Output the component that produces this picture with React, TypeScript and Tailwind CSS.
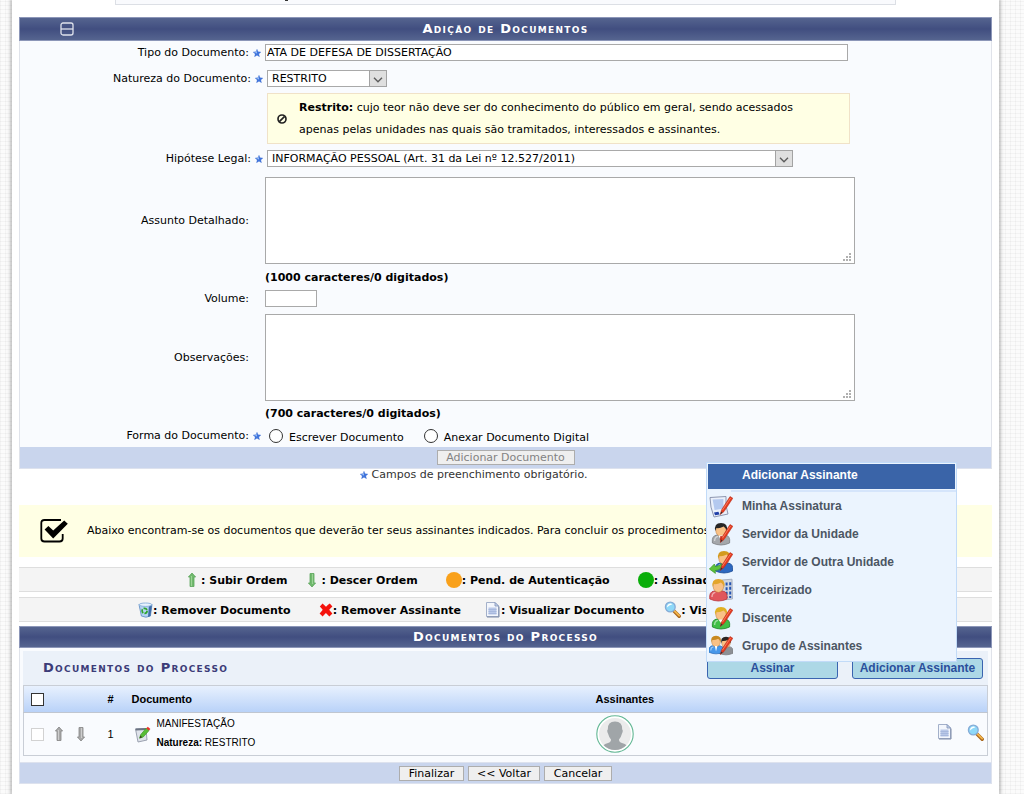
import React from "react";

const verdana = "font-['DejaVu_Sans',sans-serif]";
const arial = "font-['Liberation_Sans',sans-serif]";

function Star() {
  return (
    <svg viewBox="0 0 16 16" className="size-2 shrink-0" aria-hidden="true">
      <path d="M8 0.5 L10.2 5.6 L15.8 6.2 L11.6 9.8 L13 15.5 L8 12.4 L3 15.5 L4.4 9.8 L0.2 6.2 L5.8 5.6 Z" fill="#3f74dc" stroke="#3a6bd0" strokeWidth="0.6" />
      <path d="M8 2 L8 9 L1.5 6.8 L6.2 6.4 Z" fill="#9cc0f6" />
    </svg>
  );
}

function Arrow({ down = false, gray = false }: { down?: boolean; gray?: boolean }) {
  return (
    <svg viewBox="0 0 10 16" className={down ? "h-4 w-[10px] shrink-0 rotate-180" : "h-4 w-[10px] shrink-0"} aria-hidden="true">
      <path
        d="M5 1 L8.6 5 L7 5 L7 14.5 L3 14.5 L3 5 L1.4 5 Z"
        fill={gray ? "#a9a9a9" : "#70b96d"}
        stroke={gray ? "#848484" : "#5aa45a"}
        strokeWidth="0.8"
        strokeLinejoin="round"
      />
      <path d="M4.4 4 V14" stroke={gray ? "#d2d2d2" : "#a2d69b"} strokeWidth="1" />
    </svg>
  );
}

function PageIcon() {
  return (
    <svg viewBox="0 0 16 18" className="h-[18px] w-4 shrink-0" aria-hidden="true">
      <path d="M1.5 1.5 H10 L13.5 5 V15.5 H1.5 Z" fill="#f3f6fc" stroke="#a3b0ca" />
      <path d="M14 5.5 V16 H2" fill="none" stroke="#7c8aa6" />
      <path d="M10 1.5 V5 H13.5 Z" fill="#c9d7ef" stroke="#7e90b5" strokeWidth="0.8" />
      <rect x="3.5" y="6.500" width="8" height="7" fill="#b9c8e8" />
      <path d="M3.5 8.500 H11.5 M3.5 10.500 H11.5 M3.5 12.500 H11.5" stroke="#a7b8dd" />
    </svg>
  );
}

function Lens() {
  return (
    <svg viewBox="0 0 17 17" className="size-[17px] shrink-0" aria-hidden="true">
      <path d="M10 10 L15.2 15.2" stroke="#a8651b" strokeWidth="3.4" strokeLinecap="round" />
      <path d="M10.5 10 L15.2 14.6" stroke="#f3b54a" strokeWidth="1.8" strokeLinecap="round" />
      <circle cx="6.3" cy="6" r="4.9" fill="#8ed8f8" stroke="#86abd6" strokeWidth="1.3" />
      <path d="M3 6.4 A3.4 3.4 0 0 1 8.4 3.3 Q5 4 3 6.4" fill="#ffffff" />
    </svg>
  );
}

function Trash() {
  return (
    <svg viewBox="0 0 15 16" className="h-4 w-[15px] shrink-0" aria-hidden="true">
      <path d="M1 2.5 L14 2.5 L12.4 14 Q8 16.4 3.4 14 Z" fill="#b4d3f3" stroke="#6692c6" strokeWidth="0.9" />
      <path d="M11 3 L14 2.5 L12.4 14 L10 15 Z" fill="#3e6da9" />
      <ellipse cx="7.5" cy="2.7" rx="6.4" ry="1.7" fill="#e7f2fd" stroke="#7ba6d6" strokeWidth="0.8" />
      <circle cx="6.6" cy="8.8" r="2.5" fill="none" stroke="#2fa52c" strokeWidth="1.7" strokeDasharray="4 1.2" />
    </svg>
  );
}

function Cross() {
  return (
    <svg viewBox="0 0 14 14" className="h-[14px] w-[14px] shrink-0" aria-hidden="true">
      <path d="M0.8 3.4 L3.6 0.6 Q5 2.2 7 3.8 Q9.2 1.6 10.800 0.600 L13.400 3.400 Q11.400 5 10.200 6.800 Q11.400 8.600 13.400 10.600 L10.400 13.400 Q8.600 11.400 6.900 9.900 Q5.200 11.400 3.600 13.400 L0.600 10.600 Q2.600 8.600 3.700 6.800 Q2.600 5 0.800 3.400 Z" fill="#f4120c" />
    </svg>
  );
}

function EditIcon() {
  return (
    <svg viewBox="0 0 17 17" className="size-[17px] shrink-0" aria-hidden="true">
      <path d="M1.5 3 L12 2.5 L13 14 L4 16 Z" fill="#dfe3eb" stroke="#9299a8" strokeWidth="0.9" />
      <path d="M1.5 2.600 L12 2.100 L12.1 4 L1.8 4.6 Z" fill="#6b7382" />
      <path d="M5.600 12.200 L6.600 8.800 L12.2 2.200 L15 4.6 L9.200 11 Z" fill="#58bd36" stroke="#3f9a28" strokeWidth="0.7" />
      <path d="M12.2 2.4 L13.8 0.800 L16.4 3 L15 4.6 Z" fill="#e9312a" />
      <path d="M5.600 12.200 L6.400 9.600 L8.200 11.200 Z" fill="#37421f" />
    </svg>
  );
}

function RedPen() {
  return (
    <g>
      <path d="M11.3 20.5 L12.5 16 L21 2.6 L23.8 4.2 L15 17.6 Z" fill="#e5391f" stroke="#b8301c" strokeWidth="0.6" />
      <path d="M13.4 16.2 L21.6 4" stroke="#ff8a69" strokeWidth="0.8" />
      <path d="M11.3 20.5 L12.2 17.4 L13.6 18.4 Z" fill="#333" />
    </g>
  );
}

function Person({ hair, body, edge, x = 0 }: { hair: string; body: string; edge: string; x?: number }) {
  return (
    <g transform={`translate(${x} 0)`}>
      <path d="M2.4 21 Q1.4 13.600 7 13 L15 13 Q20.600 13.600 19.600 21 Q11 25 2.4 21 Z" fill={body} stroke={edge} strokeWidth="0.8" />
      <path d="M4.6 19 Q4.6 15 8 14.4" stroke="#ffffff" strokeOpacity="0.5" strokeWidth="1.4" fill="none" />
      <ellipse cx="11" cy="8.5" rx="5.2" ry="5.8" fill="#f9c186" stroke="#c58342" strokeWidth="0.6" />
      <path d="M5.2 9 Q3.800 1 11 1 Q18.200 1 17 9 Q15.600 6 13.6 4.6 Q9.6 6.6 6.4 6 Z" fill={hair} />
    </g>
  );
}

type SignerKind = "sign" | "unit" | "other" | "third" | "student" | "group";

function SignerIcon({ kind }: { kind: SignerKind }) {
  return (
    <svg viewBox="0 0 24 24" className="size-6 shrink-0" aria-hidden="true">
      {kind === "sign" && (
        <g>
          <path d="M1 3.5 L17 2.5 Q16 12 19 20 L5 23 Q1 13 1 3.5 Z" fill="#eaf0fb" stroke="#8e97b0" strokeWidth="1" />
          <path d="M3.600 5.600 L14.400 5 Q14 10 15 14.4 L5.6 16 Z" fill="#b4c9ef" />
          <path d="M5 18.600 L9.400 17.800 L10.600 20.400 L6 21.200 Z" fill="#1f3fa8" />
          <RedPen />
        </g>
      )}
      {kind === "unit" && (
        <g>
          <Person hair="#262626" body="#a4a7ab" edge="#7b7e82" x={1} />
          <path d="M9.4 13.4 L12 18 L14.6 13.4 Z" fill="#fff" />
          <path d="M11.4 14 L12.8 14 L13.2 18 L12 19.4 L10.8 18 Z" fill="#c72b1c" />
          <RedPen />
        </g>
      )}
      {kind === "other" && (
        <g>
          <Person hair="#d39b1f" body="#2d68c0" edge="#194a94" x={4} />
          <path d="M0.4 19 L5.400 14 L6 16.6 Q11 16 12.6 13.6 Q13.6 20 6.2 20.6 L6.400 23.400 Z" fill="#5cc23a" stroke="#3c9a28" strokeWidth="0.7" />
          <RedPen />
        </g>
      )}
      {kind === "third" && (
        <g>
          <path d="M13 2 L23 1.2 L23.400 21 L13 22 Z" fill="#cfd6e2" stroke="#9aa3b3" strokeWidth="0.8" />
          <path d="M17.600 4.6 V20 M21.200 4.2 V20" stroke="#2555b2" strokeWidth="2" strokeDasharray="3 1.6" />
          <Person hair="#e3a52c" body="#e0565c" edge="#b9383e" x={-1.6} />
        </g>
      )}
      {kind === "student" && (
        <g>
          <Person hair="#e0b024" body="#3fbf46" edge="#1c8224" x={1} />
          <path d="M9.4 13.4 L12 17 L14.6 13.4 Z" fill="#fff" />
          <RedPen />
        </g>
      )}
      {kind === "group" && (
        <g>
          <g transform="translate(8 2) scale(0.82)">
            <Person hair="#2a2624" body="#8d9095" edge="#6f7276" />
          </g>
          <g transform="translate(-2 1) scale(0.82)">
            <Person hair="#c88a22" body="#4597ea" edge="#1e62b0" />
            <path d="M9.6 13.4 L11 20 L12.6 13.4 Z" fill="#fff" />
          </g>
          <RedPen />
        </g>
      )}
    </svg>
  );
}

function Avatar() {
  return (
    <svg viewBox="0 0 38 38" className="size-[38px]" role="img" aria-label="Assinante">
      <circle cx="19" cy="19" r="18.2" fill="#fff" stroke="#62b794" strokeWidth="1.1" />
      <circle cx="19" cy="19" r="16" fill="#ebebeb" />
      <path d="M11.8 14.5 Q11.5 6.6 19 6.6 Q26.5 6.6 26.2 14.5 Q27.4 15.4 26 18.6 Q25 22.6 23 24.4 Q23 27 26 28 Q29.4 28.8 30.4 30.2 Q26 34.9 19 34.9 Q12 34.9 7.6 30.2 Q8.6 28.8 12 28 Q15 27 15 24.4 Q13 22.6 12 18.6 Q10.6 15.4 11.8 14.5 Z" fill="#a0a5a8" />
    </svg>
  );
}

function SquareCheck() {
  return (
    <svg viewBox="0 0 28 26" className="h-[26px] w-7 shrink-0" aria-hidden="true">
      <path d="M21 2 H4.500 Q1.300 2 1.300 5 V20.500 Q1.300 23.500 4.500 23.500 H19.500 Q22.700 23.500 22.700 20.500 V16" fill="none" stroke="#000" strokeWidth="1.800" />
      <path d="M4.600 11.600 L8.400 8 L13.200 12.600 L24.200 2.400 L27.800 5.800 L13.200 20.600 Z" fill="#000" />
    </svg>
  );
}

function Chevron() {
  return (
    <span className="pointer-events-none absolute inset-y-0 right-0 flex w-[18px] items-center justify-center border border-[#a3a3a3] bg-[#dfdfdf]">
      <svg viewBox="0 0 10 6" className="mt-[3px] h-[6px] w-[10px]" aria-hidden="true">
        <path d="M1 0.800 L5 4.800 L9 0.800" fill="none" stroke="#5c5c5c" strokeWidth="1.400" />
      </svg>
    </span>
  );
}

function SelectBox({ id, value, width }: { id: string; value: string; width: string }) {
  return (
    <span className={`relative block ${width}`}>
      <select id={id} className="block h-[17px] w-full appearance-none border border-[#a9a9a9] bg-white pr-5 pl-1 text-[11px] leading-[15px] text-black">
        <option>{value}</option>
      </select>
      <Chevron />
    </span>
  );
}

function TextBox({ id }: { id: string }) {
  return (
    <div className="relative max-w-[590px]">
      <textarea id={id} className="block h-[87px] w-full resize-none border border-[#a9a9a9] bg-white" />
      <svg viewBox="0 0 9 9" className="pointer-events-none absolute right-[3px] bottom-[2px] size-[9px]" aria-hidden="true">
        <path d="M6 0h2v2h-2z M3 3h2v2h-2z M6 3h2v2h-2z M0 6h2v2h-2z M3 6h2v2h-2z M6 6h2v2h-2z" fill="#b0b0b0" />
      </svg>
    </div>
  );
}

function Row({ label, id, required = false, children, className = "" }: { label: string; id: string; required?: boolean; children: React.ReactNode; className?: string }) {
  return (
    <div className={`flex items-center ${className}`}>
      <div className="flex w-[229px] shrink-0 justify-end">
        <label htmlFor={id}>{label}</label>
      </div>
      <div className="flex w-4 shrink-0 justify-center">{required && <Star />}</div>
      <div className="min-w-0 flex-1">{children}</div>
    </div>
  );
}

function Bar({ title, icon, height }: { title: string; icon?: React.ReactNode; height: string }) {
  return (
    <div className={`relative flex items-center justify-center border border-[#8c96b8] bg-linear-to-b from-[#55648f] via-[#414e80] to-[#55648f] ${height}`}>
      {icon}
      <h2 className="text-[13px] leading-4 font-bold tracking-widest text-white [font-variant:small-caps]">{title}</h2>
    </div>
  );
}

function LegendItem({ icon, text, className = "" }: { icon: React.ReactNode; text: string; className?: string }) {
  return (
    <li className={`flex shrink-0 items-center ${className}`}>
      {icon}
      <span className="mt-1 whitespace-nowrap">: {text}</span>
    </li>
  );
}

const box = "border border-[#a9a9a9] bg-white";
const formButton = "h-[15px] border border-[#adadad] bg-[#efefef] text-center text-[11px] leading-[13px]";
const actionButton = "h-[21px] w-[131px] rounded-[3px] border border-[#3a64b0] bg-[#add8e6] text-xs leading-[19px] font-bold text-[#2a4f9c]";

const signers: { kind: SignerKind; label: string }[] = [
  { kind: "sign", label: "Minha Assinatura" },
  { kind: "unit", label: "Servidor da Unidade" },
  { kind: "other", label: "Servidor de Outra Unidade" },
  { kind: "third", label: "Terceirizado" },
  { kind: "student", label: "Discente" },
  { kind: "group", label: "Grupo de Assinantes" },
];

function SignerMenu() {
  return (
    <div className="absolute bottom-[17px] -left-px z-10 w-[251px] border border-[#c2dbf8] bg-[#ebf4fe] text-xs font-bold text-[#4c5663]">
      <div className="m-px flex h-[25px] items-center bg-[#3a64a8] pb-0.5 pl-[34px] text-white">Adicionar Assinante</div>
      <div className="ml-6 h-0.5 bg-[#d5e5fb]" />
      <ul className="pb-px">
        {signers.map((s) => (
          <li key={s.kind}>
            <button type="button" className="flex h-7 w-full items-center gap-[9px] pl-0.5 text-left">
              <SignerIcon kind={s.kind} />
              <span>{s.label}</span>
            </button>
          </li>
        ))}
      </ul>
    </div>
  );
}

export default function App() {
  return (
    <div className={`min-h-screen bg-[#fbfbfb] bg-[repeating-linear-gradient(0deg,#00000008_0_1px,transparent_1px_4px),repeating-linear-gradient(90deg,#00000008_0_1px,transparent_1px_5px)] pr-[25px] pl-3 text-[11px] text-black ${verdana}`}>
      <main className="flow-root min-h-screen bg-white pr-[7px] pl-[7px] shadow-[0_0_4px_1px_#00000050]">
        <div className="mx-24 h-[5px] overflow-hidden border border-t-0 border-[#dcdfe5] bg-[#f9fafd] pl-[169px]">
          <div className="h-px w-[3px] bg-[#333]" />
        </div>

        <form className="mt-3" onSubmit={(e) => e.preventDefault()}>
          <Bar
            title="Adição de Documentos"
            height="h-6"
            icon={
              <button type="button" aria-label="Recolher" className="absolute left-10">
                <svg viewBox="0 0 14 14" className="block size-[14px]">
                  <rect x="1" y="1" width="12" height="12" rx="2" fill="none" stroke="#dfe2ec" strokeWidth="1.300" />
                  <path d="M1 7 H13" stroke="#dfe2ec" strokeWidth="1.300" />
                </svg>
              </button>
            }
          />
          <div className="border-x border-[#e0e3ea] bg-[#f9fbfe] pt-[3px] leading-[14px]">
            <Row label="Tipo do Documento:" id="tipo" required>
              <input id="tipo" defaultValue="ATA DE DEFESA DE DISSERTAÇÃO" className={`block h-[17px] w-full max-w-[583px] px-px ${box}`} />
            </Row>
            <Row label="Natureza do Documento:" id="natureza" required className="mt-[9px] pl-0.5">
              <SelectBox id="natureza" value="RESTRITO" width="w-[120px]" />
            </Row>
            <div className="mt-[6px] ml-[247px] flex h-[51px] max-w-[583px] items-center gap-3 border border-[#f0e2c8] bg-[#ffffe4] pl-[9px]">
              <svg viewBox="0 0 12 12" className="size-[10px] shrink-0" aria-hidden="true">
                <circle cx="6" cy="6" r="4.800" fill="none" stroke="#222" strokeWidth="2" />
                <path d="M2.800 9.200 L9.200 2.800" stroke="#222" strokeWidth="2" />
              </svg>
              <p className="max-w-[520px] leading-[22px]">
                <b>Restrito:</b> cujo teor não deve ser do conhecimento do público em geral, sendo acessados apenas pelas unidades nas quais são tramitados, interessados e assinantes.
              </p>
            </div>
            <Row label="Hipótese Legal:" id="hipotese" required className="mt-[6px] pl-0.5">
              <SelectBox id="hipotese" value="INFORMAÇÃO PESSOAL (Art. 31 da Lei nº 12.527/2011)" width="w-full max-w-[526px]" />
            </Row>
            <Row label="Assunto Detalhado:" id="assunto" className="mt-[10px]">
              <TextBox id="assunto" />
            </Row>
            <p className="mt-[7px] ml-[245px] font-bold">(1000 caracteres/0 digitados)</p>
            <Row label="Volume:" id="volume" className="mt-[5px]">
              <input id="volume" className={`block h-[17px] w-[52px] ${box}`} />
            </Row>
            <Row label="Observações:" id="observacoes" className="mt-[7px]">
              <TextBox id="observacoes" />
            </Row>
            <p className="mt-[6px] ml-[245px] font-bold">(700 caracteres/0 digitados)</p>
            <Row label="Forma do Documento:" id="escrever" required className="mt-[5px] mb-px h-5">
              <div className="flex items-center pl-1">
                <input type="radio" name="forma" id="escrever" className="size-[14px] appearance-none rounded-full border border-[#333] bg-white" />
                <label htmlFor="escrever" className="mt-1 ml-[6px]">Escrever Documento</label>
                <input type="radio" name="forma" id="anexar" className="ml-5 size-[14px] appearance-none rounded-full border border-[#333] bg-white" />
                <label htmlFor="anexar" className="mt-1 ml-[6px]">Anexar Documento Digital</label>
              </div>
            </Row>
            <div className="flex h-[22px] items-center justify-center border-b border-[#dde2ee] bg-[#c9d5ed]">
              <button type="button" disabled className={`w-[138px] text-[#838383] ${formButton}`}>Adicionar Documento</button>
            </div>
          </div>
        </form>

        <p className="flex h-3 items-center justify-center gap-1 pr-16 text-[#333]">
          <Star />
          Campos de preenchimento obrigatório.
        </p>

        <div className="mt-6 flex h-[52px] items-center gap-[19px] overflow-hidden bg-[#ffffe4] pl-[21px]">
          <SquareCheck />
          <p className="whitespace-nowrap">Abaixo encontram-se os documentos que deverão ter seus assinantes indicados. Para concluir os procedimentos.</p>
        </div>

        <ul className="mt-[10px] flex h-[25px] items-center overflow-hidden border-y border-[#dedede] bg-[#f4f4f4] pl-[168px] font-bold">
          <LegendItem className="gap-1" icon={<Arrow />} text="Subir Ordem" />
          <LegendItem className="ml-5 gap-1" icon={<Arrow down />} text="Descer Ordem" />
          <LegendItem className="ml-7" icon={<span className="size-4 rounded-full bg-[#f9a11b]" />} text="Pend. de Autenticação" />
          <LegendItem className="ml-7" icon={<span className="size-4 rounded-full bg-[#0aae0a]" />} text="Assinado" />
        </ul>
        <ul className="mt-[5px] flex h-[25px] items-center overflow-hidden border-y border-[#dedede] bg-[#f4f4f4] pl-[119px] font-bold">
          <LegendItem icon={<Trash />} text="Remover Documento" />
          <LegendItem className="ml-7" icon={<Cross />} text="Remover Assinante" />
          <LegendItem className="ml-6" icon={<PageIcon />} text="Visualizar Documento" />
          <LegendItem className="ml-5" icon={<Lens />} text="Visualizar" />
        </ul>

        <section className="mt-1">
          <Bar title="Documentos do Processo" height="h-[22px]" />
          <div className="border-x border-[#e0e3ea] bg-[#f9fbfe] px-[3px] pt-[3px] pb-[6px]">
            <div className="flex h-[34px] items-center justify-between bg-[#ebf1f9] pr-[5px] pl-5">
              <h3 className="text-[13px] font-bold tracking-widest text-[#3c3c78] [font-variant:small-caps]">Documentos do Processo</h3>
              <div className={`relative flex gap-[14px] ${arial}`}>
                <button type="button" className={actionButton}>Assinar</button>
                <button type="button" className={actionButton}>Adicionar Assinante</button>
                <SignerMenu />
              </div>
            </div>
            <table className={`w-full table-fixed border border-[#c9ced6] text-[11px] ${arial}`}>
              <colgroup>
                <col className="w-[30px]" />
                <col className="w-[48px]" />
                <col className="w-[18px]" />
                <col />
                <col className="w-[336px]" />
                <col className="w-[56px]" />
              </colgroup>
              <thead>
                <tr className="h-[27px] border-b border-[#c0c6d0] bg-linear-to-b from-[#e8f1fe] to-[#b9d2f8] text-left">
                  <th className="pl-[7px]">
                    <input type="checkbox" aria-label="Selecionar todos" className="block size-[13px] appearance-none border border-[#333] bg-white" />
                  </th>
                  <th />
                  <th className="text-center">#</th>
                  <th className="pl-3">Documento</th>
                  <th>Assinantes</th>
                  <th />
                </tr>
              </thead>
              <tbody>
                <tr className="h-[43px]">
                  <td className="pl-[7px]">
                    <input type="checkbox" disabled aria-label="Selecionar" className="block size-[13px] appearance-none border border-[#d2d2d2] bg-white" />
                  </td>
                  <td>
                    <div className="flex gap-3">
                      <button type="button" aria-label="Subir Ordem"><Arrow gray /></button>
                      <button type="button" aria-label="Descer Ordem"><Arrow gray down /></button>
                    </div>
                  </td>
                  <td className="text-center">1</td>
                  <td>
                    <div className="flex items-center gap-[6px] pl-[14px]">
                      <EditIcon />
                      <div className="pb-0.5 text-[10px] leading-[19px]">
                        MANIFESTAÇÃO
                        <br />
                        <b>Natureza:</b> RESTRITO
                      </div>
                    </div>
                  </td>
                  <td><Avatar /></td>
                  <td>
                    <div className="flex items-center justify-end gap-[14px] pr-[3px] pb-1">
                      <button type="button" aria-label="Visualizar Documento"><PageIcon /></button>
                      <button type="button" aria-label="Visualizar"><Lens /></button>
                    </div>
                  </td>
                </tr>
              </tbody>
            </table>
          </div>
          <div className="flex h-[22px] items-center justify-center gap-1 border border-[#dde2ee] bg-[#c9d5ed]">
            <button type="button" className={`w-[65px] ${formButton}`}>Finalizar</button>
            <button type="button" className={`w-[72px] ${formButton}`}>&lt;&lt; Voltar</button>
            <button type="button" className={`w-[68px] ${formButton}`}>Cancelar</button>
          </div>
        </section>
      </main>
    </div>
  );
}
